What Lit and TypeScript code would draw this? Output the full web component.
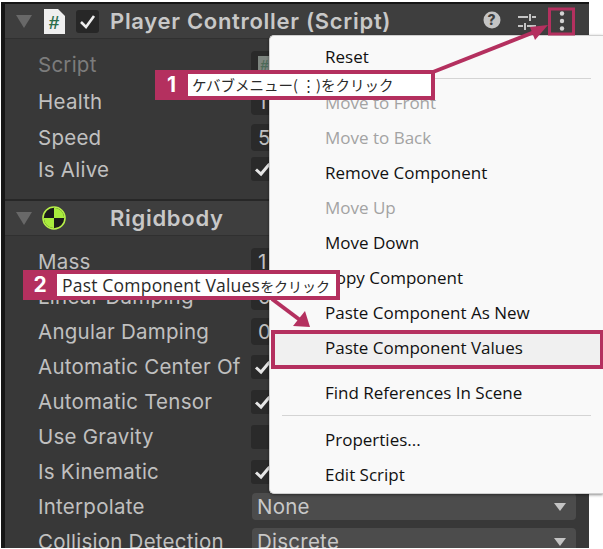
import { LitElement, html, css, svg } from "lit";
import { customElement } from "lit/decorators.js";

const check = svg`<path d="M5 12.5 L10 17 L18.5 7" fill="none" stroke="#e6e6e6" stroke-width="3"/>`;

@customElement("app-root")
export class AppRoot extends LitElement {
  static styles = css`
    :host { display: block; position: relative; width: 603px; height: 549px; overflow: hidden; background: #fff; font-family: Inter, "Noto Sans", sans-serif; }
    .panel { width: 584px; height: 544px; margin: 0 0 0 1px; position: relative; top: 2px; background: #383838; border: solid #161616; border-width: 2px 0 0 4px; overflow: hidden; display: flex; flex-direction: column; }
    .head { flex: none; height: 34px; background: #3e3e3e; display: flex; align-items: center; border-bottom: 1px solid #303030; color: #c8c8c8; font-size: 22px; font-weight: 600; letter-spacing: 0.7px; }
    .tri { width: 0; height: 0; margin-left: 11px; border: solid transparent; border-width: 13px 8px 0; border-top-color: #686868; flex: none; }
    .script-ico { flex: none; margin-left: 11px; width: 22px; height: 25px; display: block; }
    .body-ico { flex: none; margin-left: 10px; width: 24px; height: 24px; display: block; }
    .box { flex: none; width: 23px; height: 23px; margin-left: 11px; background: #272727; border-radius: 3px; display: block; }
    .title { margin-left: 11px; white-space: nowrap; }
    .rb .title { margin-left: 44px; }
    .tools { margin-left: auto; display: flex; align-items: center; }
    .tools svg { display: block; }
    .sec1 { flex: none; height: 162px; padding-top: 7px; box-sizing: border-box; border-bottom: 2px solid #272727; }
    .row { display: flex; align-items: center; padding-left: 33px; color: #c0c0c0; font-size: 20.5px; letter-spacing: 0.25px; white-space: nowrap; }
    .row .lbl { width: 213px; flex: none; overflow: hidden; }
    .h37 { height: 37px; }
    .h36 { height: 36px; }
    .h28 { height: 28px; }
    .h35 { height: 35px; }
    .dim { color: #7c7c7c; }
    .field { width: 325px; height: 27px; background: #2a2a2a; border-radius: 4px; padding-left: 7px; box-sizing: border-box; line-height: 27px; color: #c0c0c0; display: flex; align-items: center; }
    .thumb { display: block; width: 13px; height: 18px; flex: none; }
    .chk { width: 24px; height: 24px; background: #2a2a2a; border-radius: 3px; }
    .chk svg { display: block; }
    .sel { width: 324px; height: 27px; margin-left: 1px; background: #4c4c4c; border-radius: 4px; display: flex; align-items: center; justify-content: space-between; padding: 0 10px 0 5px; box-sizing: border-box; color: #c8c8c8; }
    .sel i { width: 0; height: 0; border: solid transparent; border-width: 8px 6px 0; border-top-color: #c4c4c4; }
    .sec2 { flex: none; padding-top: 8px; }
    .menu { position: absolute; left: 269px; top: 35px; width: 334px; height: 459px; box-sizing: border-box; background: #f9f9f9; border: 1px solid #cfcfcf; border-right: none; border-radius: 5px 0 0 5px; box-shadow: 0 1px 3px rgba(0,0,0,.45); font-family: "Open Sans", "Noto Sans", sans-serif; font-size: 17px; color: #111; padding-top: 3px; }
    .mi { height: 35px; line-height: 35px; padding-left: 55px; white-space: nowrap; }
    .mi.off { color: #a3a3a3; }
    .sep { height: 1px; background: #d4d4d4; margin: 4px 12px 6px; }
    .sep.low { margin-top: 5px; }
    .hl { margin: 0 0 0 1px; height: 39px; line-height: 28px; padding-left: 50px; box-sizing: border-box; background: #f0f0f0; border: 4px solid #b4305f; border-right-width: 3px; }
    .gap { margin-top: 6px; }
    .tag { position: absolute; display: flex; align-items: stretch; border: 4px solid #b4305f; border-left: none; background: #b4305f; box-sizing: border-box; height: 30px; }
    .tag b { width: 33px; color: #fff; font: 700 21px/22px Inter, sans-serif; text-align: center; }
    .tag span { flex: 1; background: #fff; color: #2a2a2a; font-family: "Noto Sans CJK JP", sans-serif; line-height: 22px; white-space: nowrap; padding-left: 4px; }
    .t1 { left: 155px; top: 70px; width: 280px; }
    .t1 span { font-size: 14.5px; }
    .t2 { left: 23px; top: 270px; width: 317px; }
    .t2 b { width: 34px; }
    .t2 span { font-size: 17.5px; letter-spacing: 0.2px; font-family: "Open Sans", "Noto Sans CJK JP", sans-serif; padding-left: 5px; }
    .t2 em { font-style: normal; font-size: 14px; letter-spacing: 0; font-family: "Noto Sans CJK JP", sans-serif; }
    .over { position: absolute; left: 0; top: 0; pointer-events: none; }
    .ml { margin-left: 15px; }
    .kebab { margin: 0 17px 0 15px; }
  `;

  field(v: unknown) {
    return html`<div class="field">${v}</div>`;
  }
  chk(on: boolean) {
    return html`<div class="chk">${on ? html`<svg width="24" height="24" viewBox="0 0 24 24">${check}</svg>` : ""}</div>`;
  }

  render() {
    return html`
      <div class="panel">
        <div class="head">
          <span class="tri"></span>
          <svg class="script-ico" viewBox="0 0 22 25"><path d="M1 0H15L22 7V25H1Z" fill="#efefef"/><text x="11.5" y="19.5" font-family="Liberation Sans" font-size="19" font-weight="700" fill="#2c6e4b" text-anchor="middle">#</text></svg>
          <svg class="box" viewBox="0 0 23 23"><path d="M5 12 L10 17 L18 6" fill="none" stroke="#eee" stroke-width="2.6"/></svg>
          <span class="title">Player Controller (Script)</span>
          <span class="tools">
            <svg width="20" height="20" viewBox="0 0 20 20"><circle cx="10" cy="9" r="8.5" fill="#c4c4c4"/><text x="10" y="14" text-anchor="middle" font-family="Inter" font-size="14" font-weight="800" fill="#3e3e3e">?</text></svg>
            <svg class="ml" width="20" height="20" viewBox="0 0 20 20" fill="none" stroke="#c4c4c4" stroke-width="2"><path d="M1 6H11M15 6H19M13 3V10M1 15H6M10 15H19M8 12V19" /></svg>
            <svg class="kebab" width="20" height="22" viewBox="0 0 20 22" fill="#d4d4d4"><circle cx="10" cy="3.5" r="2.2"/><circle cx="10" cy="11" r="2.2"/><circle cx="10" cy="18.5" r="2.2"/></svg>
          </span>
        </div>
        <div class="sec1">
          <div class="row h37"><span class="lbl dim">Script</span><div class="field dim"><svg class="thumb" viewBox="0 0 13 18"><rect width="13" height="18" fill="#7d857f"/><text x="6.5" y="14" font-family="Liberation Sans" font-size="14" font-weight="700" fill="#4c6a58" text-anchor="middle">#</text></svg></div></div>
          <div class="row h36"><span class="lbl">Health</span>${this.field("1")}</div>
          <div class="row h36"><span class="lbl">Speed</span>${this.field("5")}</div>
          <div class="row h28"><span class="lbl">Is Alive</span>${this.chk(true)}</div>
        </div>
        <div class="head rb">
          <span class="tri"></span>
          <svg class="body-ico" viewBox="0 0 24 24"><circle cx="12" cy="12" r="11" fill="#1b1b1b" stroke="#b7f04a" stroke-width="1.6"/><path d="M12 12V1.8A10.2 10.2 0 0 1 22.2 12ZM12 12V22.2A10.2 10.2 0 0 1 1.8 12Z" fill="#a8ec3c"/></svg>
          <span class="title">Rigidbody</span>
        </div>
        <div class="sec2">
          <div class="row h35"><span class="lbl">Mass</span>${this.field("1")}</div>
          <div class="row h35"><span class="lbl">Linear Damping</span>${this.field("0")}</div>
          <div class="row h35"><span class="lbl">Angular Damping</span>${this.field("0")}</div>
          <div class="row h35"><span class="lbl">Automatic Center Of</span>${this.chk(true)}</div>
          <div class="row h35"><span class="lbl">Automatic Tensor</span>${this.chk(true)}</div>
          <div class="row h35"><span class="lbl">Use Gravity</span>${this.chk(false)}</div>
          <div class="row h35"><span class="lbl">Is Kinematic</span>${this.chk(true)}</div>
          <div class="row h35"><span class="lbl">Interpolate</span><div class="sel">None<i></i></div></div>
          <div class="row h35"><span class="lbl">Collision Detection</span><div class="sel">Discrete<i></i></div></div>
        </div>
      </div>

      <div class="menu">
        <div class="mi">Reset</div>
        <div class="sep"></div>
        <div class="mi off">Move to Front</div>
        <div class="mi off">Move to Back</div>
        <div class="mi">Remove Component</div>
        <div class="mi off">Move Up</div>
        <div class="mi">Move Down</div>
        <div class="mi">Copy Component</div>
        <div class="mi">Paste Component As New</div>
        <div class="hl">Paste Component Values</div>
        <div class="mi gap">Find References In Scene</div>
        <div class="sep low"></div>
        <div class="mi">Properties...</div>
        <div class="mi">Edit Script</div>
      </div>

      <svg class="over" width="603" height="549" viewBox="0 0 603 549">
        <rect x="549.5" y="9" width="24" height="25" fill="none" stroke="#b4305f" stroke-width="3"/>
        <path d="M433 72 L537 31" stroke="#b4305f" stroke-width="4" fill="none"/>
        <path d="M548 25 L530 27 L535 40Z" fill="#b4305f"/>
        <path d="M272 299 L300 320" stroke="#b4305f" stroke-width="4" fill="none"/>
        <path d="M310 327 L293 326 L305 311Z" fill="#b4305f"/>
      </svg>
      <div class="tag t1"><b>1</b><span>ケバブメニュー( ⋮)をクリック</span></div>
      <div class="tag t2"><b>2</b><span>Past Component Values<em>をクリック</em></span></div>
    `;
  }
}
